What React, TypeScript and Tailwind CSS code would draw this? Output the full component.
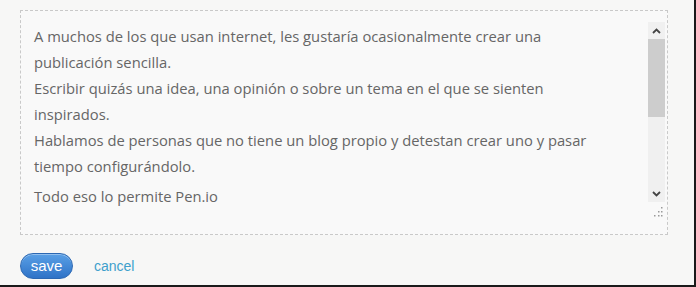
import React from 'react';

const lines = [
  'A muchos de los que usan internet, les gustaría ocasionalmente crear una publicación sencilla.',
  'Escribir quizás una idea, una opinión o sobre un tema en el que se sienten inspirados.',
  'Hablamos de personas que no tiene un blog propio y detestan crear uno y pasar tiempo configurándolo.',
];

export default function App() {
  return (
    <div className="w-[696px] h-[287px] bg-[#f7f7f6] border-r-2 border-b-2 border-[#1a1a1a] pl-5 pt-[10px] font-['Open_Sans',sans-serif]">
      {/* editor box */}
      <div className="w-[648px] h-[225px] border border-dashed border-[#c9c9c9] bg-[#f9f9f9] flex">
        <div className="flex-1 pl-[13px] pt-[12px] pr-[30px] text-[14.75px] leading-[26px] text-[#666]">
          {lines.map((l) => (
            <p key={l}>{l}</p>
          ))}
          <p className="mt-[4px]">Todo eso lo permite Pen.io</p>
        </div>
        {/* scrollbar + grip */}
        <div className="w-[17px] mr-[2px] flex flex-col pt-[11px]">
          <div className="h-[180px] bg-[#f0f0f0] flex flex-col">
            <div className="h-[17px] flex items-center justify-center">
              <svg width="9" height="6" viewBox="0 0 9 6"><path d="M1 5 L4.5 1.5 L8 5" stroke="#444" strokeWidth="1.8" fill="none" /></svg>
            </div>
            <div className="h-[78px] bg-[#cdcdcd]" />
            <div className="flex-1" />
            <div className="h-[17px] flex items-center justify-center">
              <svg width="9" height="6" viewBox="0 0 9 6"><path d="M1 1 L4.5 4.5 L8 1" stroke="#444" strokeWidth="1.8" fill="none" /></svg>
            </div>
          </div>
          <div className="flex justify-end pr-[2px] pt-[5px]">
            <svg width="10" height="10" viewBox="0 0 10 10" fill="#9a9a9a">
              <rect x="8" y="0" width="1.5" height="1.5" />
              <rect x="5" y="4" width="1.5" height="1.5" />
              <rect x="8" y="4" width="1.5" height="1.5" />
              <rect x="1" y="8" width="1.5" height="1.5" />
              <rect x="5" y="8" width="1.5" height="1.5" />
              <rect x="8" y="8" width="1.5" height="1.5" />
            </svg>
          </div>
        </div>
      </div>

      {/* actions */}
      <div className="flex items-center gap-[21px] mt-[18px]">
        <button className="h-[26px] w-[53px] rounded-full border border-[#2c68b3] bg-gradient-to-b from-[#5aa0e6] to-[#2f73c7] text-white text-[15px] leading-none pb-[2px] font-[Liberation_Sans,Arial,sans-serif] shadow-[inset_0_1px_0_rgba(255,255,255,0.35)]">
          save
        </button>
        <a href="#" className="text-[#3ea0cc] text-[14px] font-[Liberation_Sans,Arial,sans-serif]">cancel</a>
      </div>
    </div>
  );
}
